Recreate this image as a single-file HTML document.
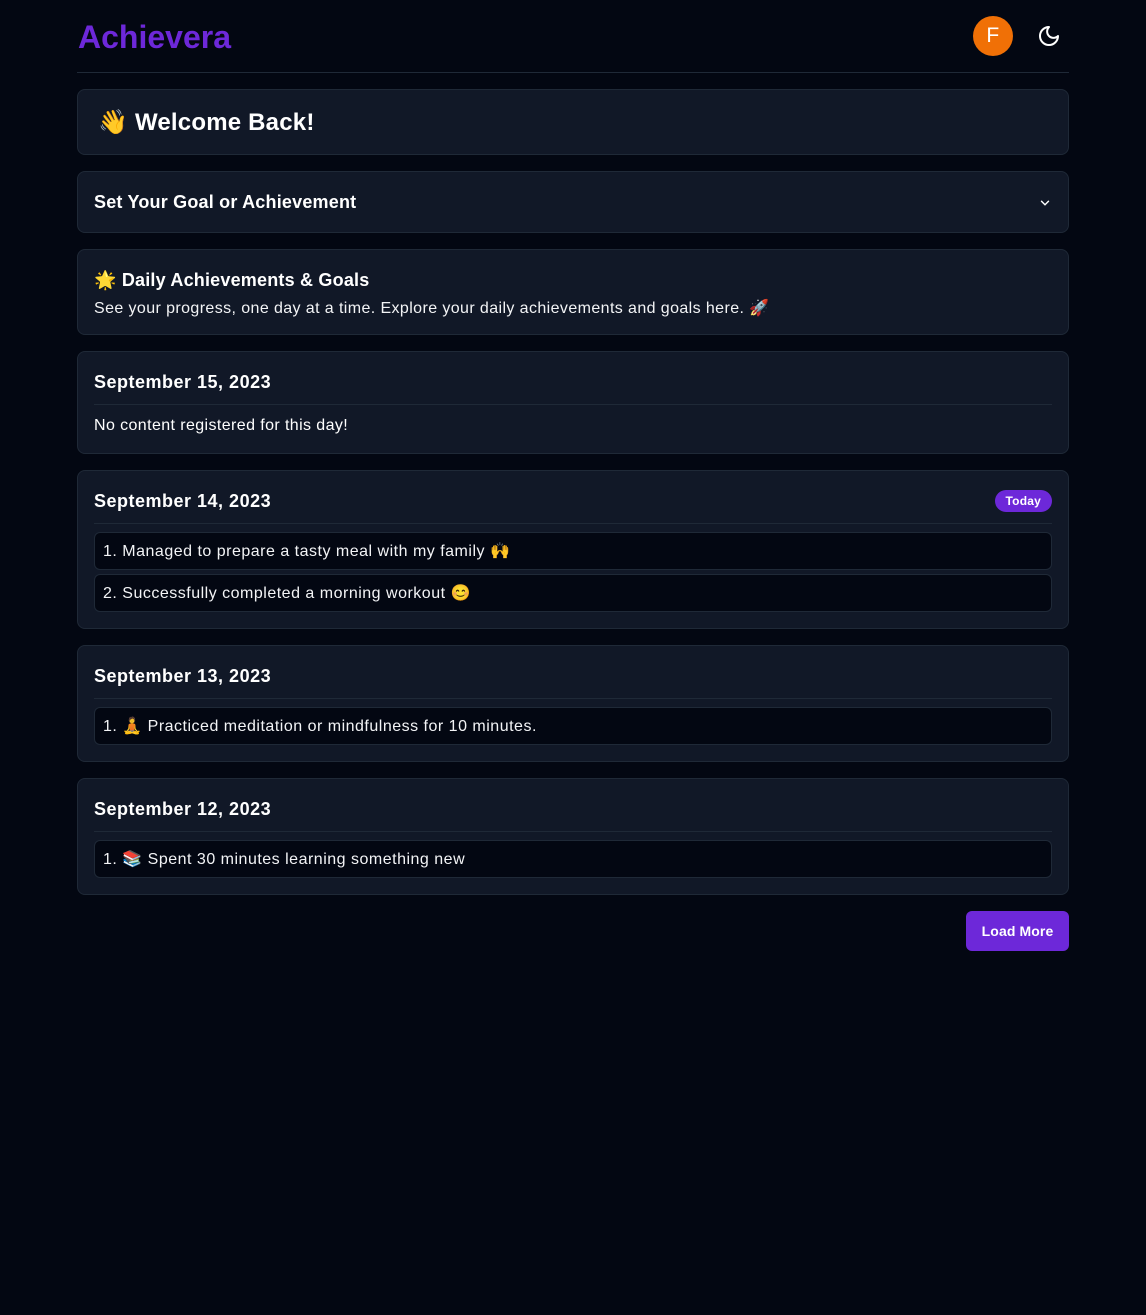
<!DOCTYPE html>
<html><head><meta charset="utf-8"><style>
*{box-sizing:border-box;margin:0;padding:0}
body{width:1146px;height:1315px;background:#030712;color:#f9fafb;font-family:"Liberation Sans","Noto Sans CJK JP",sans-serif;position:relative;overflow:hidden;letter-spacing:0.4px}
.a{position:absolute}
.card{position:absolute;left:77px;width:992px;background:#111827;border:1px solid #1f2937;border-radius:8px}
.h{position:absolute;left:16px;font-weight:bold;font-size:18px;color:#fff;letter-spacing:0.5px}
.hr{position:absolute;left:16px;right:16px;height:1px;background:#1f2937}
.item{position:absolute;left:16px;right:16px;height:38px;background:#030712;border:1px solid #1f2937;border-radius:6px;font-size:16px;line-height:38px;padding-left:8px;color:#f3f4f6;letter-spacing:0.5px}
</style></head><body>
<div class="a" style="left:78px;top:21px;font-size:32px;font-weight:bold;color:#6d28d9;letter-spacing:0px;line-height:32px">Achievera</div>
<div class="a" style="left:973px;top:16px;width:40px;height:40px;border-radius:50%;background:#f07006;color:#fff;font-size:21px;text-align:center;line-height:40px">F</div>
<svg class="a" style="left:1037px;top:24px" width="24" height="24" viewBox="0 0 24 24" fill="none" stroke="#fff" stroke-width="2" stroke-linecap="round" stroke-linejoin="round"><path d="M12 3a6 6 0 0 0 9 9 9 9 0 1 1-9-9Z"/></svg>
<div class="a" style="left:77px;top:72px;width:992px;height:1px;background:#1f2937"></div>

<div class="card" style="top:89px;height:66px"><div class="h" style="left:20px;top:18px;font-size:24px;letter-spacing:0.2px">👋 Welcome Back!</div></div>

<div class="card" style="top:171px;height:62px"><div class="h" style="top:20px;letter-spacing:0.2px">Set Your Goal or Achievement</div>
<svg class="a" style="right:16px;top:24px" width="14" height="14" viewBox="0 0 24 24" fill="none" stroke="#fff" stroke-width="2.5" stroke-linecap="round"><path d="m6 9 6 6 6-6"/></svg></div>

<div class="card" style="top:249px;height:86px"><div class="h" style="top:20px;letter-spacing:0.2px">🌟 Daily Achievements &amp; Goals</div>
<div class="a" style="left:16px;top:48px;font-size:16px;color:#f3f4f6">See your progress, one day at a time. Explore your daily achievements and goals here. 🚀</div></div>

<div class="card" style="top:351px;height:103px"><div class="h" style="top:20px">September 15, 2023</div><div class="hr" style="top:52px"></div>
<div class="a" style="left:16px;top:65px;font-size:16px;color:#fff">No content registered for this day!</div></div>

<div class="card" style="top:470px;height:159px"><div class="h" style="top:20px">September 14, 2023</div>
<div class="a" style="right:16px;top:19px;background:#6d28d9;border-radius:11px;height:22px;padding:0 11px;font-size:12px;font-weight:bold;line-height:22px;color:#fff;letter-spacing:0.2px">Today</div>
<div class="hr" style="top:52px"></div>
<div class="item" style="top:61px">1. Managed to prepare a tasty meal with my family 🙌</div>
<div class="item" style="top:103px">2. Successfully completed a morning workout 😊</div></div>

<div class="card" style="top:645px;height:117px"><div class="h" style="top:20px">September 13, 2023</div><div class="hr" style="top:52px"></div>
<div class="item" style="top:61px">1. 🧘 Practiced meditation or mindfulness for 10 minutes.</div></div>

<div class="card" style="top:778px;height:117px"><div class="h" style="top:20px">September 12, 2023</div><div class="hr" style="top:52px"></div>
<div class="item" style="top:61px">1. 📚 Spent 30 minutes learning something new</div></div>

<div class="a" style="left:966px;top:911px;width:103px;height:40px;background:#6d28d9;border-radius:6px;color:#fff;font-size:14px;text-align:center;line-height:40px;font-weight:bold;letter-spacing:0.1px">Load More</div>
</body></html>
